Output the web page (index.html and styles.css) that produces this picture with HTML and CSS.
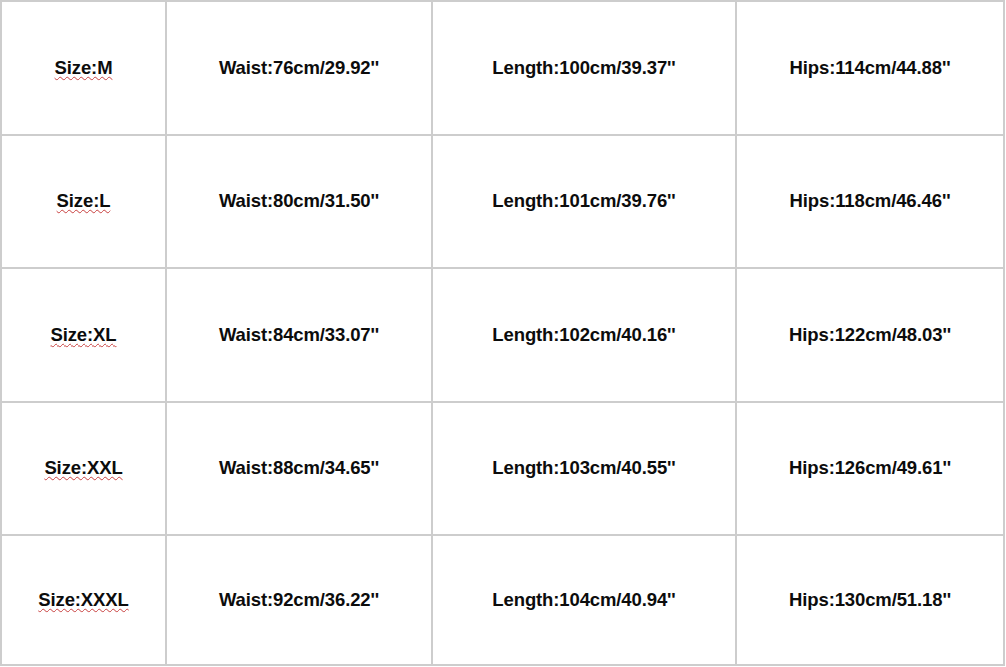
FILE: index.html
```html
<!DOCTYPE html>
<html>
<head>
<meta charset="utf-8">
<link rel="stylesheet" href="styles.css">
</head>
<body>
<div class="chart">
  <div class="cell size"><span class="sq">Size:M</span></div>
  <div class="cell">Waist:76cm/29.92''</div>
  <div class="cell">Length:100cm/39.37''</div>
  <div class="cell">Hips:114cm/44.88''</div>

  <div class="cell size"><span class="sq">Size:L</span></div>
  <div class="cell">Waist:80cm/31.50''</div>
  <div class="cell">Length:101cm/39.76''</div>
  <div class="cell">Hips:118cm/46.46''</div>

  <div class="cell size"><span class="sq">Size:XL</span></div>
  <div class="cell">Waist:84cm/33.07''</div>
  <div class="cell">Length:102cm/40.16''</div>
  <div class="cell">Hips:122cm/48.03''</div>

  <div class="cell size"><span class="sq">Size:XXL</span></div>
  <div class="cell">Waist:88cm/34.65''</div>
  <div class="cell">Length:103cm/40.55''</div>
  <div class="cell">Hips:126cm/49.61''</div>

  <div class="cell size"><span class="sq">Size:XXXL</span></div>
  <div class="cell">Waist:92cm/36.22''</div>
  <div class="cell">Length:104cm/40.94''</div>
  <div class="cell">Hips:130cm/51.18''</div>
</div>
</body>
</html>
```
FILE: styles.css
```css
html, body {
  margin: 0;
  padding: 0;
  background: #ffffff;
}

.chart {
  width: 1005px;
  height: 666px;
  box-sizing: border-box;
  display: grid;
  grid-template-columns: 163px 264px 302px 266px;
  grid-template-rows: 132px 131px 132px 131px 128px;
  gap: 2px;
  padding: 2px;
  background: #cdcdcd;
}

.cell {
  background: #ffffff;
  display: flex;
  align-items: center;
  justify-content: center;
  padding-bottom: 1px;
  box-sizing: border-box;
  font-family: "Liberation Sans", Arial, sans-serif;
  font-weight: bold;
  font-size: 18.5px;
  color: #0c0c0c;
  letter-spacing: -0.12px;
}

.sq {
  text-decoration: underline wavy #c8403f;
  text-decoration-thickness: 1px;
  text-underline-offset: 2px;
}
```
